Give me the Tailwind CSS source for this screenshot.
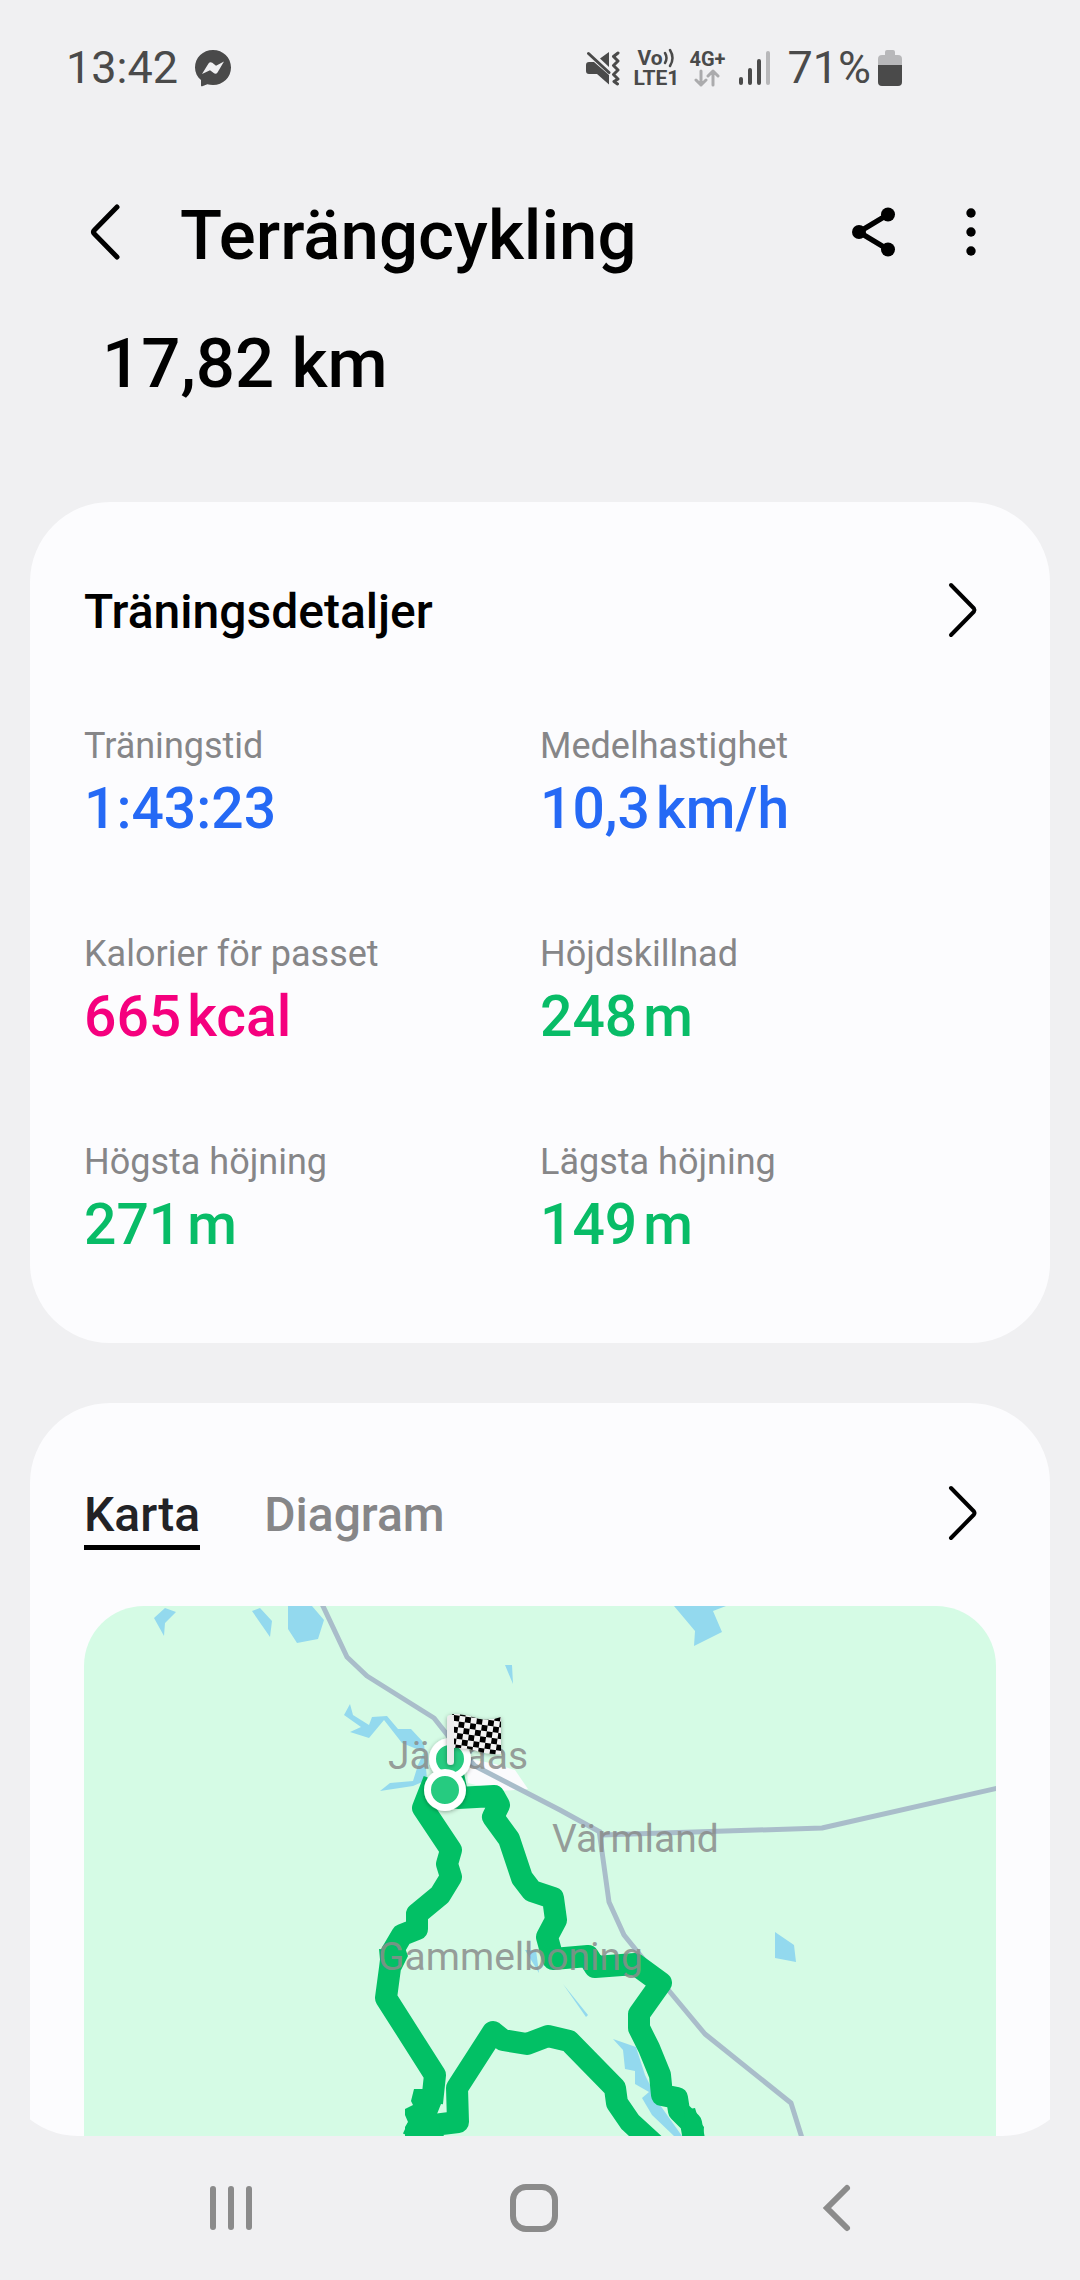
<!DOCTYPE html>
<html lang="sv">
<head>
<meta charset="utf-8">
<meta name="viewport" content="width=device-width, initial-scale=1">
<title>Terrängcykling</title>
<script src="https://cdn.jsdelivr.net/npm/@tailwindcss/browser@4"></script>
</head>
<body class="flex h-screen flex-col overflow-hidden bg-[#f0f0f2] font-['Roboto',sans-serif] text-black">

<!-- Status bar -->
<div class="flex h-[136px] shrink-0 items-center justify-between pr-[178px] pl-[66px] text-[#4a4a4a]">
  <div class="flex items-center gap-4">
    <span class="text-[45px] leading-[52px]">13:42</span>
    <svg class="size-[38px]" viewBox="0 0 38 38" aria-hidden="true">
      <path fill="#4a4a4a" d="M19 1C9 1 1 8.600 1 18.500c0 5 2.200 9.300 6 12.500v5.500c0 .8.700 1 1.300.7l5-1.900c1.800.5 3.700.7 5.700.7 10 0 18-7.600 18-17.500S29 1 19 1z"/>
      <path fill="#f0f0f2" d="M8 25l6.500-10.500c1-1.500 2.600-1.600 3.800-.7l3.700 2.900L30 12.500l-6.500 11c-1 1.500-2.600 1.500-3.800.6L16 21.300z"/>
    </svg>
  </div>
  <div class="flex items-center gap-3">
    <svg class="h-9 w-[36px]" viewBox="0 0 36 36" fill="#4a4a4a" aria-hidden="true">
      <path d="M4 12h5l15 13v9.500L12 24H4q-3 0-3-3v-6q0-3 3-3zM24 2v15L15 8.500z"/>
      <path d="M3.500 3.500L24 22.500M33 3l-4.500 3.500L33 11l-4.500 4.500L33 20l-4.500 4.500L33 29l-4 2.500 3.500 2.500" fill="none" stroke="#4a4a4a" stroke-width="3" stroke-linecap="round" stroke-linejoin="round"/>
    </svg>
    <div class="flex w-[44px] flex-col text-[21px] leading-[20px] font-bold">
      <span class="flex items-center pl-1">Vo<svg class="h-5 w-3" viewBox="0 0 12 20" fill="none" stroke="#4a4a4a" stroke-width="2.500" stroke-linecap="round" aria-hidden="true"><path d="M2 5q3 5 0 10M7 2q5 8 0 16"/></svg></span>
      <span>LTE1</span>
    </div>
    <div class="flex w-[36px] flex-col items-center text-[20px] leading-[20px] font-bold">
      <span>4G+</span>
      <svg class="h-[18px] w-7" viewBox="0 0 28 18" fill="none" stroke="#ababad" stroke-width="3" stroke-linecap="round" stroke-linejoin="round" aria-hidden="true"><path d="M8 2v14M3 11l5 5 5-5M20 16V2M15 7l5-5 5 5"/></svg>
    </div>
    <svg class="mr-1 h-9 w-[34px]" viewBox="0 0 34 36" stroke-width="4" stroke-linecap="round" stroke="#4a4a4a" aria-hidden="true"><path d="M4 29v4M13 20v13M22 11v22"/><path stroke="#b8b8ba" d="M31 3v30"/></svg>
    <div class="flex items-center gap-[7px]">
      <span class="text-[45px] leading-[52px]">71%</span>
      <svg class="h-9 w-6" viewBox="0 0 24 36" aria-hidden="true"><path fill="#b8b8ba" d="M7 2q0-2 2-2h6q2 0 2 2v3h3q4 0 4 4v7H0V9q0-4 4-4h3z"/><path fill="#4a4a4a" d="M0 15h24v17q0 4-4 4H4q-4 0-4-4z"/></svg>
    </div>
  </div>
</div>

<main class="flex min-h-0 flex-1 flex-col overflow-hidden rounded-b-[78px]">
  <header class="shrink-0 pt-[50px]">
    <div class="flex h-[92px] items-center pr-[84px] pl-[84px]">
      <button type="button" aria-label="Tillbaka" class="mr-[52px]">
        <svg class="block h-[60px] w-11" viewBox="0 0 44 60" fill="none" stroke="#000" stroke-width="5" stroke-linecap="round" stroke-linejoin="round"><path d="M33 5L10.500 28q-2 2 0 4L33 55" /></svg>
      </button>
      <h1 class="flex-1 pt-2 text-[69px] leading-[80px] font-medium">Terrängcykling</h1>
      <button type="button" aria-label="Dela" class="mr-11">
        <svg class="block h-[60px] w-[60px]" viewBox="0 0 60 60"><path d="M46 12.500L17 30l29 17.500" fill="none" stroke="#000" stroke-width="5.500"/><circle cx="46" cy="12.500" r="7"/><circle cx="17" cy="30" r="7"/><circle cx="46" cy="47.500" r="7"/></svg>
      </button>
      <button type="button" aria-label="Fler alternativ">
        <svg class="block h-[60px] w-[50px]" viewBox="0 0 50 60"><circle cx="25" cy="11" r="4.700"/><circle cx="25" cy="30" r="4.700"/><circle cx="25" cy="49" r="4.700"/></svg>
      </button>
    </div>
    <p class="mt-[46px] mb-[98px] pl-[102px] text-[69px] leading-[80px] font-medium">17,82 km</p>
  </header>

  <section class="mx-[30px] shrink-0 rounded-[80px] bg-[#fcfcfe] px-[54px] pt-[76px] pb-[78px]">
    <div class="flex h-16 items-center justify-between">
      <h2 class="pt-1 text-[48px] leading-[60px] font-medium">Träningsdetaljer</h2>
      <a href="#detaljer" aria-label="Visa träningsdetaljer" class="mr-4"><svg class="block h-[60px] w-9" viewBox="0 0 36 60" fill="none" stroke="#000" stroke-width="4" stroke-linecap="round" stroke-linejoin="round"><path d="M7 5l23 23.500q1 1.500 0 3L7 55"/></svg></a>
    </div>
    <dl class="mt-[82px] grid grid-cols-2 gap-y-[83px]">
      <div><dt class="text-[36px] leading-[44px] text-[#868688]">Träningstid</dt><dd class="pt-px text-[57px] leading-[80px] font-medium text-[#2569f5]">1:43:23</dd></div>
      <div><dt class="text-[36px] leading-[44px] text-[#868688]">Medelhastighet</dt><dd class="flex gap-1.5 pt-px text-[57px] leading-[80px] font-medium text-[#2569f5]"><span>10,3</span><span>km/h</span></dd></div>
      <div><dt class="text-[36px] leading-[44px] text-[#868688]">Kalorier för passet</dt><dd class="flex gap-1.5 pt-px text-[57px] leading-[80px] font-medium text-[#f5007e]"><span>665</span><span>kcal</span></dd></div>
      <div><dt class="text-[36px] leading-[44px] text-[#868688]">Höjdskillnad</dt><dd class="flex gap-1.5 pt-px text-[57px] leading-[80px] font-medium text-[#08bc67]"><span>248</span><span>m</span></dd></div>
      <div><dt class="text-[36px] leading-[44px] text-[#868688]">Högsta höjning</dt><dd class="flex gap-1.5 pt-px text-[57px] leading-[80px] font-medium text-[#08bc67]"><span>271</span><span>m</span></dd></div>
      <div><dt class="text-[36px] leading-[44px] text-[#868688]">Lägsta höjning</dt><dd class="flex gap-1.5 pt-px text-[57px] leading-[80px] font-medium text-[#08bc67]"><span>149</span><span>m</span></dd></div>
    </dl>
  </section>

  <section class="mx-[30px] mt-[60px] flex min-h-0 flex-1 flex-col rounded-t-[80px] bg-[#fcfcfe] px-[54px] pt-20">
    <div class="flex shrink-0 items-start justify-between">
      <div class="flex gap-16" role="tablist">
        <button type="button" role="tab" aria-selected="true" class="border-b-5 border-black pt-0.5 text-[48px] leading-[60px] font-medium text-[#222226]">Karta</button>
        <button type="button" role="tab" aria-selected="false" class="border-b-5 border-transparent pt-0.5 text-[48px] leading-[60px] font-medium text-[#868688]">Diagram</button>
      </div>
      <a href="#karta" aria-label="Visa karta" class="mr-4"><svg class="block h-[60px] w-9" viewBox="0 0 36 60" fill="none" stroke="#000" stroke-width="4" stroke-linecap="round" stroke-linejoin="round"><path d="M7 5l23 23.500q1 1.500 0 3L7 55"/></svg></a>
    </div>
    <div class="mt-14 min-h-0 flex-1 overflow-hidden rounded-t-[60px] bg-[#d5fbe5]">
      <svg class="block size-full" viewBox="84 1606 912 530" preserveAspectRatio="xMidYMin slice" role="img" aria-label="Karta över rutten">
        <defs>
          <pattern id="checks" width="11.600" height="11.600" patternUnits="userSpaceOnUse" patternTransform="translate(454 1715) rotate(8)">
            <rect width="11.600" height="11.600" fill="#f2f2f2"/><path d="M0 0h5.800v5.800H0zM5.800 5.800h5.800v5.800H5.800z"/>
          </pattern>
          <filter id="shade" x="-30%" y="-30%" width="160%" height="160%"><feDropShadow dx="0" dy="1" stdDeviation="2" flood-opacity=".35"/></filter>
        </defs>
        <!-- Lakes -->
        <g fill="#93d9ee">
          <path d="M154 1618l11-10 11 4-11 11-1 13zM252 1611l8-3 12 13-2 16zM288 1606h24l12 14-6 19-21 4-9-14zM674 1606h52l-13 5 9 21-28 14 1-15zM505 1665h7l1 19z"/>
          <path d="M344 1715l6-11 3 11 16 10 3-8 15-1 11 13h13l13 14 3 37-14 6-33 5 10-8 23-2 5-16 6-13-22-9-18-23-15 18-19-6 11-5z"/>
          <path d="M775 1932l19 13 2 17-21-4zM525 1950h11l3 23zM563 1984l25 31-2 2zM613 2039l23 8 9 28 15 30 22 31h-8l-22-21-10-17 7-6-14-8v-13l-10-2-2-19z"/>
        </g>
        <path fill="#fbfbfd" d="M466 1758l29 6 20 6 13 19-28 2-32-8z"/>
        <!-- Roads -->
        <g fill="none" stroke="#a9bdca" stroke-width="5" stroke-linejoin="round">
          <path d="M322 1604l25 53 20 19 67 42 19 24 22 24 85 44 40 22 1 3 221-7 176-40"/>
          <path d="M599 1830l10 72 15 33 46 57 35 42 86 69 11 35"/>
        </g>
        <!-- Route -->
        <g fill="none" stroke="#02c065" stroke-width="22" stroke-linejoin="round">
          <path d="M434 1780l-11 28 28 42-4 14 4 13-11 18-23 19v15l-15 6-10 17-2 16-4 30 49 77-3 28"/>
          <path d="M450 1760l8 38 36-2 5 9-6 12 16 22 13 39 10 13 21 7 3 22-9 17 6 22 35-3 7 11 40-3 26 19-22 31v14l10 20 11 27 2 20 15 3 2 13 12 12 4 22"/>
          <path d="M413 2138l5-11 40-5-1-34 36-56 10 8 24 4 21-8 21 5 46 47 2 15 13 19 24 22"/>
        </g>
        <path fill="#02c065" d="M414 2089h28l-1 15-4 10 3 15 4 7h-39v-9l3-5-3-7v-6l8-4-2-4zM392 1950l10-10 6 16-7 14h-20l-2-21zM684 2110l11-2 4 13 5 6-1 10h-16z"/>
        <g fill="#8a8c8b" fill-opacity=".85" font-family="Roboto, sans-serif" font-size="39">
          <text x="388" y="1769">Järnaas</text>
          <text x="552" y="1852">Värmland</text>
          <text x="378" y="1970">Gammelboning</text>
        </g>
        <!-- Start and finish markers -->
        <g fill="#25cb80" stroke="#fff" stroke-width="7" filter="url(#shade)">
          <circle cx="450" cy="1759" r="17.500"/>
          <circle cx="445" cy="1790" r="17.500"/>
        </g>
        <g filter="url(#shade)">
          <path fill="url(#checks)" d="M452 1714q12 0 24 4t25-1v37q-12 1-24-3t-25-3z"/>
          <rect x="447" y="1715" width="7" height="50" rx="3.500" fill="#ececec"/>
        </g>
      </svg>
    </div>
  </section>
</main>

<!-- System navigation -->
<nav class="grid h-36 shrink-0 grid-cols-3 items-center pr-[92px] pl-20" aria-label="Systemnavigering">
  <button type="button" aria-label="Senaste" class="justify-self-center"><svg class="block size-[52px]" viewBox="0 0 52 52" stroke="#8b8b8b" stroke-width="6" stroke-linecap="round"><path d="M8 7v38M26 7v38M44 7v38"/></svg></button>
  <button type="button" aria-label="Hem" class="justify-self-center"><svg class="block size-[52px]" viewBox="0 0 52 52" fill="none" stroke="#8b8b8b" stroke-width="6"><rect x="5" y="5" width="42" height="42" rx="13"/></svg></button>
  <button type="button" aria-label="Bakåt" class="justify-self-center"><svg class="block size-[52px]" viewBox="0 0 52 52" fill="none" stroke="#8b8b8b" stroke-width="6" stroke-linecap="round"><path d="M36 6L16 26l20 20"/></svg></button>
</nav>
</body>
</html>
